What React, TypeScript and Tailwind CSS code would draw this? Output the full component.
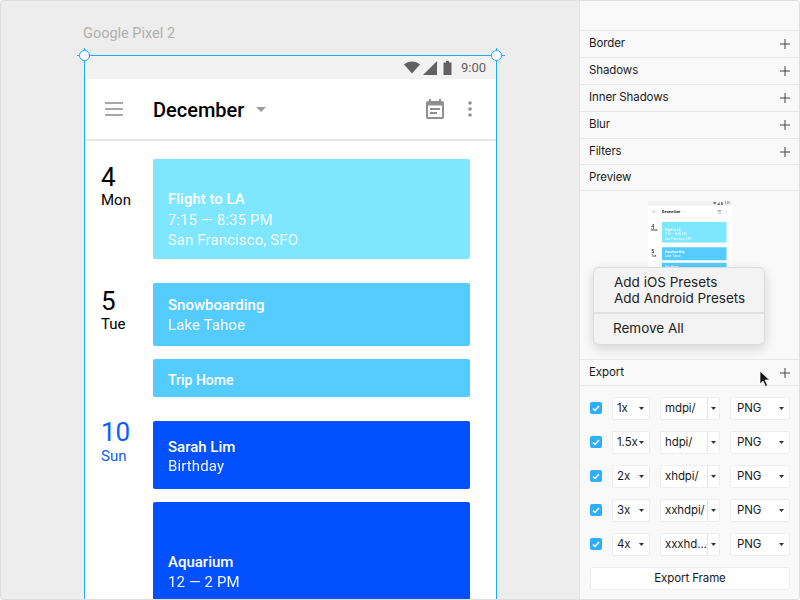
const phoneFont = { fontFamily: 'Roboto, sans-serif' };

function Card({ title, lines, className, titleClass = 'text-[15px]' }: { title: string; lines: string[]; className: string; titleClass?: string }) {
  return (
    <div className={`rounded-[2px] pl-[15px] flex flex-col justify-end text-white ${className}`}>
      <div className={`leading-[20px] font-medium ${titleClass}`}>{title}</div>
      {lines.map((l) => (
        <div key={l} className="text-[15px] leading-[20px] tracking-[0.12px] opacity-95">{l}</div>
      ))}
    </div>
  );
}

function DateLabel({ day, name, blue }: { day: string; name: string; blue?: boolean }) {
  return (
    <div className={`w-[52px] shrink-0 ${blue ? 'text-[#0a5cff] -mt-[4px]' : 'text-black pt-[3px]'}`}>
      <div className="text-[26px] leading-[30px]">{day}</div>
      <div className={`text-[15px] leading-[18px] ${blue ? 'mt-0' : '-mt-[1px]'}`}>{name}</div>
    </div>
  );
}

function Phone() {
  return (
    <div className="w-[411px] h-[544px] bg-white overflow-hidden" style={phoneFont}>
      <div className="h-[23px] bg-[#f2f2f2] flex items-center justify-end pr-[10px] gap-[3px] text-[#616161]">
        <svg width="16" height="13" viewBox="0 0 16 13"><path d="M0 3.500C2 1.500 5 0.500 8 0.500s6 1 8 3L8 12.500z" fill="#616161" /></svg>
        <svg width="14" height="14" viewBox="0 0 14 14"><path d="M14 0v14H0z" fill="#616161" /></svg>
        <svg width="9" height="14" viewBox="0 0 9 14" className="ml-[3px]"><path d="M3 0h3v1.500h2.500V14H0.500V1.500H3z" fill="#616161" /></svg>
        <span className="text-[13px] ml-[6px] leading-none">9:00</span>
      </div>
      <div className="h-[60px] flex items-center border-b-2 border-[#e6e6e6] box-content">
        <svg width="18" height="14" viewBox="0 0 18 14" className="ml-[20px]">
          <path d="M0 1h18M0 7h18M0 13h18" stroke="#8c8c8c" strokeWidth="1.700" />
        </svg>
        <span className="ml-[30px] mt-[1px] text-[20px] font-medium text-black">December</span>
        <svg width="10" height="5" viewBox="0 0 10 5" className="ml-[12px]"><path d="M0 0h10L5 5z" fill="#9a9a9a" /></svg>
        <svg width="18" height="20" viewBox="0 0 18 20" className="ml-auto">
          <path d="M3 0h2v2h8V0h2v2h1a2 2 0 0 1 2 2v14a2 2 0 0 1-2 2H2a2 2 0 0 1-2-2V4a2 2 0 0 1 2-2h1z" fill="#8f8f8f" />
          <path d="M2 6.500h14V18H2z" fill="#fff" />
          <path d="M4 9h10v2H4zM4 13h7v2H4z" fill="#8f8f8f" />
        </svg>
        <svg width="4" height="16" viewBox="0 0 4 16" className="ml-[24px] mr-[24px]">
          <circle cx="2" cy="2" r="1.800" fill="#8f8f8f" />
          <circle cx="2" cy="8" r="1.800" fill="#8f8f8f" />
          <circle cx="2" cy="14" r="1.800" fill="#8f8f8f" />
        </svg>
      </div>
      <div className="pl-4 pr-[26px] pt-[18px] flex flex-col gap-6">
        <div className="flex">
          <DateLabel day="4" name="Mon" />
          <Card title="Flight to LA" titleClass="text-[15px] mb-[1px]" lines={['7:15 — 8:35 PM', 'San Francisco, SFO']} className="flex-1 h-[100px] pb-[9px] bg-[#7ee6ff]" />
        </div>
        <div className="flex">
          <DateLabel day="5" name="Tue" />
          <div className="flex-1 flex flex-col gap-[13px]">
            <Card title="Snowboarding" lines={['Lake Tahoe']} className="h-[63px] pb-[11px] bg-[#55ccff]" />
            <Card title="Trip Home" titleClass="text-[14px]" lines={[]} className="h-[38px] pb-[7px] bg-[#55ccff]" />
          </div>
        </div>
        <div className="flex">
          <DateLabel day="10" name="Sun" blue />
          <div className="flex-1 flex flex-col gap-[13px]">
            <Card title="Sarah Lim" titleClass="text-[15px] -mb-[1px]" lines={['Birthday']} className="h-[68px] pb-[13px] bg-[#0250ff]" />
            <Card title="Aquarium" lines={['12 — 2 PM']} className="h-[110px] pb-[20px] bg-[#0250ff]" />
          </div>
        </div>
      </div>
    </div>
  );
}

function Handle({ className }: { className: string }) {
  return (
    <div className={`absolute w-[16px] h-[16px] ${className}`}>
      <div className="absolute left-0 right-0 top-[7px] h-px bg-[#1aa9ff]" />
      <div className="absolute top-0 bottom-0 left-[7px] w-px bg-[#1aa9ff]" />
      <div className="absolute left-[2px] top-[2px] w-[11px] h-[11px] rounded-full bg-white border border-[#1aa9ff]" />
    </div>
  );
}

function SectionRow({ label, plus = true, className = 'h-[27px]' }: { label: string; plus?: boolean; className?: string }) {
  return (
    <div className={`${className} border-b border-[#e8e8e8] pl-[9px] pr-[10px] flex items-center justify-between text-[11.500px] tracking-[-0.1px] text-[#1a1a1a]`}>
      <span>{label}</span>
      {plus && (
        <svg width="10" height="10" viewBox="0 0 10 10"><path d="M5 0v10M0 5h10" stroke="#444" strokeWidth="1" /></svg>
      )}
    </div>
  );
}

function Caret() {
  return <svg width="5" height="3" viewBox="0 0 5 3" className="shrink-0"><path d="M0 0h5L2.500 3z" fill="#333" /></svg>;
}

function ExportRow({ scale, folder }: { scale: string; folder: string }) {
  return (
    <div className="flex items-center h-[23px] text-[11.500px] tracking-[-0.1px] text-[#1a1a1a]">
      <div className="w-3 h-3 -mt-[1px] rounded-[2px] bg-[#2eaeff] flex items-center justify-center">
        <svg width="8" height="7" viewBox="0 0 8 7"><path d="M1 3.500l2 2 4-4.500" fill="none" stroke="#fff" strokeWidth="1.500" /></svg>
      </div>
      <div className="ml-[10px] w-[38px] h-[23px] bg-white rounded-[2px] border border-[#eeeeee] flex items-center justify-between pl-1 pr-[5px]">
        <span>{scale}</span>
        <Caret />
      </div>
      <div className="ml-[10px] w-[60px] h-[23px] bg-white rounded-[2px] border border-[#eeeeee] flex items-center">
        <span className="w-[47px] pl-[4px] border-r border-[#e4e4e4] h-full flex items-center whitespace-nowrap overflow-hidden">{folder}</span>
        <span className="flex-1 flex justify-center"><Caret /></span>
      </div>
      <div className="ml-[10px] w-[60px] h-[23px] bg-white rounded-[2px] border border-[#eeeeee] flex items-center justify-between pl-[6px] pr-[5px]">
        <span>PNG</span>
        <Caret />
      </div>
    </div>
  );
}

export default function App() {
  const rows = [
    ['1x', 'mdpi/'],
    ['1.5x', 'hdpi/'],
    ['2x', 'xhdpi/'],
    ['3x', 'xxhdpi/'],
    ['4x', 'xxxhd...'],
  ];
  return (
    <div className="relative w-[800px] h-[600px] flex overflow-hidden rounded-[4px] bg-[#ededed]" style={{ fontFamily: 'Inter, sans-serif' }}>
      <div className="w-[579px] h-full relative overflow-hidden">
        <div className="absolute left-[83px] top-[26px] text-[14.500px] leading-[16px] text-[#b0b0b0]" style={phoneFont}>Google Pixel 2</div>
        <div className="absolute left-[84px] top-[55px] border border-[#1aa9ff] w-[413px] h-[560px]">
          <Phone />
        </div>
        <Handle className="left-[77px] top-[48px]" />
        <Handle className="left-[489px] top-[48px]" />
      </div>
      <div className="w-[221px] h-full bg-[#f9f9f9] border-l border-[#e3e3e3] flex flex-col">
        <div className="h-[31px] border-b border-[#e8e8e8]" />
        <SectionRow label="Border" />
        <SectionRow label="Shadows" />
        <SectionRow label="Inner Shadows" />
        <SectionRow label="Blur" />
        <SectionRow label="Filters" className="h-[26px]" />
        <SectionRow label="Preview" plus={false} className="h-[26px]" />
        <div className="h-[169px] relative border-b border-[#e8e8e8] overflow-hidden">
          <div className="absolute left-[68px] top-[10px] w-[84px] h-[111px] overflow-hidden blur-[0.3px]">
            <div className="origin-top-left scale-[0.204]">
              <Phone />
            </div>
          </div>
          <div className="absolute left-[13px] top-[76px] w-[172px] h-[78px] rounded-[6px] bg-[#f3f3f3] border border-[#dcdcdc] shadow-[0_4px_12px_rgba(0,0,0,0.15)] text-[13.500px] text-[#222] flex flex-col">
            <div className="h-[46px] pl-[20px] pt-[6px] leading-[16px] border-b-2 border-[#dfe1e1]">
              <div>Add iOS Presets</div>
              <div>Add Android Presets</div>
            </div>
            <div className="pl-[19px] pt-[5px] leading-[18px]">Remove All</div>
          </div>
        </div>
        <div className="relative">
          <SectionRow label="Export" className="h-[26px]" />
          <svg width="12" height="18" viewBox="0 0 12 18" className="absolute left-[179px] top-[10px]">
            <path d="M1 1v13l3-3 2.500 5.500 2-1L6 10h4.500z" fill="#111" stroke="#fff" strokeWidth="0.700" />
          </svg>
        </div>
        <div className="pl-[10px] pt-[11px] flex flex-col gap-[11px]">
          {rows.map(([s, f]) => (
            <ExportRow key={s} scale={s} folder={f} />
          ))}
          <div className="w-[200px] h-[23px] bg-white rounded-[2px] border border-[#eeeeee] flex items-center justify-center text-[11.500px] tracking-[-0.1px] text-[#1a1a1a]">Export Frame</div>
        </div>
      </div>
      <div className="absolute inset-0 rounded-[4px] border border-[#dedede] pointer-events-none" />
    </div>
  );
}
